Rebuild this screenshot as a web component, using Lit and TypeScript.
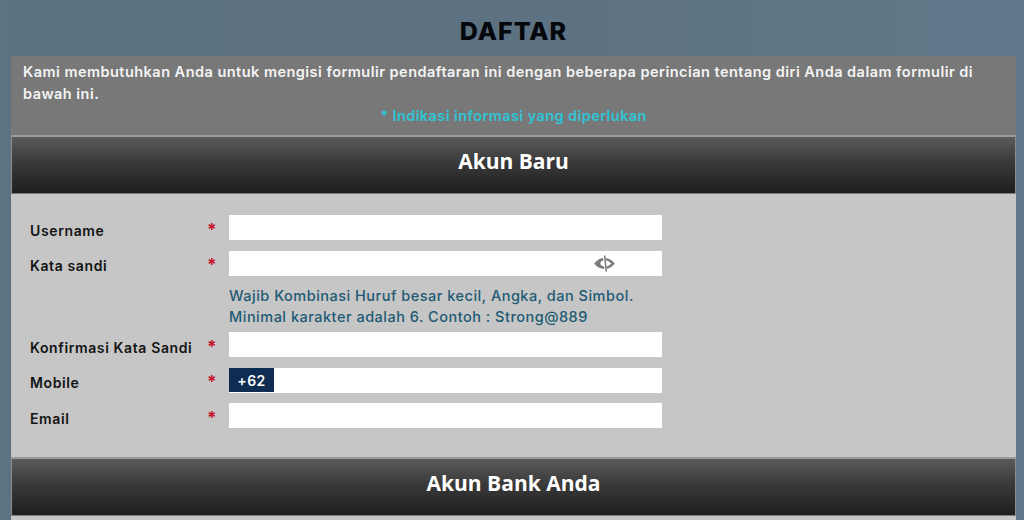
import { LitElement, html, css, svg } from "lit";
import { customElement } from "lit/decorators.js";

const eye = svg`<svg class="eye" viewBox="0 0 20 16" width="21" height="17" aria-hidden="true">
  <path d="M0.2 8 C2.5 5 5.2 3 8.6 2.7 L9 5.2 C7.2 5.5 6 6.7 6 8.1 C6 9.5 7.4 10.5 9.5 10.9 L9.9 13.3 C5.8 13.1 2.5 11 0.2 8 Z" fill="#7c7c7c"/>
  <path d="M11.4 2.8 C14.8 3.3 17.6 5.2 19.8 8 C17.7 10.8 15.2 12.5 12.2 13.1 L11.8 10.9 C13.6 10.4 15.2 9.4 16.4 8 C15 6.4 13.4 5.5 11.7 5.1 Z" fill="#7c7c7c"/>
  <path d="M9.4 0.4 L10.9 0.4 L12.4 15.6 L10.9 15.6 Z" fill="#7c7c7c"/>
</svg>`;

@customElement("app-root")
export class AppRoot extends LitElement {
  static styles = css`
    :host {
      display: block;
      width: 1024px;
      height: 520px;
      overflow: hidden;
      box-sizing: border-box;
      padding: 0 8px 0 11px;
      font-family: "Inter", "Liberation Sans", sans-serif;
      background: linear-gradient(90deg, #5b7383 0%, #5b7080 40%, #61798a 100%);
    }
    h1 {
      margin: 0;
      height: 56px;
      box-sizing: border-box;
      padding-top: 16px;
      text-align: center;
      font-size: 25px;
      letter-spacing: 1px;
      line-height: 30px;
      font-weight: 800;
      color: #04070b;
    }
    .intro {
      background: #787878;
      height: 79px;
      box-sizing: border-box;
      padding: 5px 12px 0 12px;
      font-size: 14.5px;
      letter-spacing: 0.47px;
      line-height: 22px;
      font-weight: 600;
      color: #f4f4f4;
    }
    .intro p { margin: 0; }
    .req {
      text-align: center;
      color: #2ec5d6;
      line-height: 21px;
      letter-spacing: 0.42px;
    }
    .head {
      height: 59px;
      box-sizing: border-box;
      border: 1px solid #8c8c8c;
      border-top: 2px solid #9a9a9a;
      border-bottom-color: #7c7c7c;
      padding-bottom: 8px;
      background: linear-gradient(180deg, #5a5a5a 0%, #3a3a3a 45%, #1e1e1e 100%);
      display: flex;
      align-items: center;
      justify-content: center;
      font-family: "Open Sans", "Liberation Sans", sans-serif;
      font-size: 21px;
      font-weight: 700;
      color: #fff;
    }
    .body {
      background: #c6c6c6;
      height: 263px;
      box-sizing: border-box;
      padding: 21px 0 0 19px;
      display: flex;
      flex-direction: column;
    }
    .tail { background: #c6c6c6; height: 10px; }
    .row {
      display: grid;
      grid-template-columns: 178px 21px 433px;
      align-items: center;
      height: 25px;
      margin-bottom: 10.5px;
      font-size: 14px;
      letter-spacing: 0.62px;
      font-weight: 600;
      color: #141414;
    }
    .label { padding-top: 5px; }
    .star {
      color: #c3162c;
      font-size: 17px;
      font-weight: 700;
      margin-left: -1px;
      padding-top: 4px;
    }
    .field {
      height: 25px;
      background: #fff;
      display: flex;
      align-items: center;
      justify-content: flex-end;
      padding-right: 47px;
      box-sizing: border-box;
    }
    .phone { justify-content: flex-start; padding-right: 0; }
    .code {
      width: 45px;
      height: 24px;
      background: #0f2d52;
      color: #fff;
      font-size: 14px;
      letter-spacing: 0.4px;
      font-weight: 600;
      display: flex;
      align-items: center;
      justify-content: center;
    }
    .hint {
      margin: -1px 0 5px 199px;
      font-size: 14.5px;
      letter-spacing: 0.5px;
      line-height: 21px;
      font-weight: 500;
      color: #1d5a73;
    }
  `;

  private row(label: string, content: unknown = html`<div class="field"></div>`) {
    return html`<div class="row"><span class="label">${label}</span><span class="star">*</span>${content}</div>`;
  }

  render() {
    return html`
      <h1>DAFTAR</h1>
      <div class="intro">
        <p>Kami membutuhkan Anda untuk mengisi formulir pendaftaran ini dengan beberapa perincian tentang diri Anda dalam formulir di bawah ini.</p>
        <p class="req">* Indikasi informasi yang diperlukan</p>
      </div>
      <div class="head">Akun Baru</div>
      <div class="body">
        ${this.row("Username")}
        ${this.row("Kata sandi", html`<div class="field">${eye}</div>`)}
        <div class="hint">Wajib Kombinasi Huruf besar kecil, Angka, dan Simbol.<br />Minimal karakter adalah 6. Contoh : Strong@889</div>
        ${this.row("Konfirmasi Kata Sandi")}
        ${this.row("Mobile", html`<div class="field phone"><span class="code">+62</span></div>`)}
        ${this.row("Email")}
      </div>
      <div class="head">Akun Bank Anda</div>
      <div class="tail"></div>
    `;
  }
}
